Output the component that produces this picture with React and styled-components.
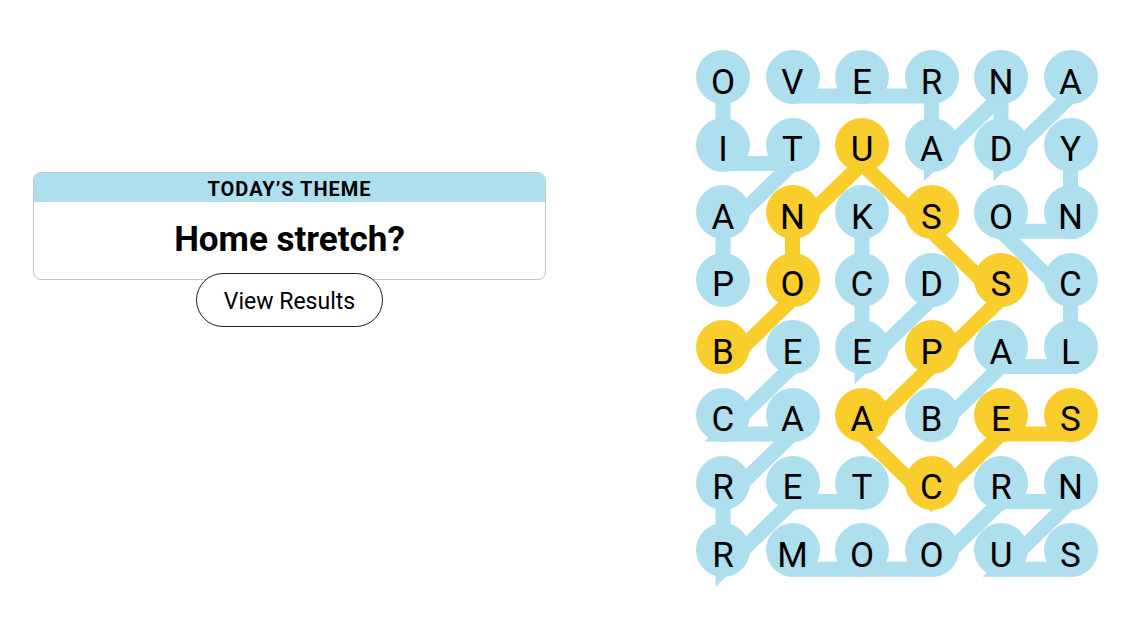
import React from "react";
import styled, { createGlobalStyle } from "styled-components";

const GlobalStyle = createGlobalStyle`
  html, body { margin: 0; padding: 0; background: #ffffff; }
  body { font-family: Roboto, "Liberation Sans", Arial, sans-serif; color: #000; }
`;

const BLUE = "#aedfee";
const YELLOW = "#f8cd2c";

const CELL = 54;
const PITCH_X = 69.5;
const PITCH_Y = 67.6;
const LINE_DY = 19;

const LETTERS = [
  "OVERNA",
  "ITUADY",
  "ANKSON",
  "POCDSC",
  "BEEPAL",
  "CAABES",
  "RETCRN",
  "RMOOUS",
];

const WORDS = [
  { kind: "blue", cells: [[3, 0], [2, 0], [1, 1], [1, 0], [0, 0]] },
  { kind: "blue", cells: [[0, 1], [0, 2], [0, 3], [1, 3], [0, 4], [1, 4], [0, 5]] },
  { kind: "blue", cells: [[5, 3], [4, 4], [4, 5], [3, 5], [2, 4], [2, 5], [1, 5]] },
  { kind: "blue", cells: [[3, 3], [4, 2], [3, 2], [2, 2]] },
  { kind: "blue", cells: [[6, 2], [6, 1], [7, 0], [6, 0], [5, 1], [5, 0], [4, 1]] },
  { kind: "blue", cells: [[7, 5], [7, 4], [6, 5], [6, 4], [7, 3], [7, 2], [7, 1]] },
  {
    kind: "yellow",
    cells: [[4, 0], [3, 1], [2, 1], [1, 2], [2, 3], [3, 4], [4, 3], [5, 2], [6, 3], [5, 4], [5, 5]],
  },
];

const cellKind = {};
WORDS.forEach((w) => w.cells.forEach(([r, c]) => (cellKind[`${r}-${c}`] = w.kind)));

const Page = styled.main`
  display: flex;
  align-items: flex-start;
  height: 637px;
  overflow: hidden;
`;

const ThemeColumn = styled.section`
  width: 513px;
  margin-left: 33px;
  padding-top: 172px;
  display: flex;
  flex-direction: column;
  align-items: center;
`;

const ThemeCard = styled.div`
  width: 100%;
  box-sizing: border-box;
  border: 1px solid #c4c4c4;
  border-radius: 8px;
  overflow: hidden;
  background: #fff;
`;

const ThemeHeader = styled.div`
  height: 29px;
  background: ${BLUE};
  display: flex;
  align-items: center;
  justify-content: center;
  font-size: 20px;
  font-weight: 700;
  letter-spacing: 1px;
  text-transform: uppercase;
  padding-top: 3px;
  box-sizing: border-box;
`;

const ThemeTitle = styled.h2`
  margin: 0;
  height: 77px;
  display: flex;
  align-items: center;
  justify-content: center;
  font-size: 35px;
  font-weight: 700;
  letter-spacing: 0;
  padding-bottom: 2px;
  box-sizing: border-box;
`;

const ResultsButton = styled.button`
  position: relative;
  margin-top: -7px;
  width: 187px;
  height: 54px;
  border-radius: 27px;
  border: 1px solid #222;
  background: #fff;
  color: #000;
  font-family: Roboto, "Liberation Sans", Arial, sans-serif;
  font-size: 23px;
  font-weight: 400;
  padding: 2px 0 0;
  cursor: pointer;
`;

const BoardColumn = styled.section`
  margin-left: 150px;
  padding-top: 50px;
`;

const Board = styled.div`
  position: relative;
  display: grid;
  grid-template-columns: repeat(6, ${CELL}px);
  grid-auto-rows: ${CELL}px;
  column-gap: ${PITCH_X - CELL}px;
  row-gap: ${PITCH_Y - CELL}px;
`;

const Links = styled.svg`
  position: absolute;
  left: 0;
  top: 0;
  overflow: visible;
  pointer-events: none;
  z-index: 0;
`;

const LetterCell = styled.button`
  position: relative;
  z-index: 1;
  width: ${CELL}px;
  height: ${CELL}px;
  border: none;
  border-radius: 50%;
  padding: 10px 0 0;
  box-sizing: border-box;
  background: ${(p) => (p.$kind === "yellow" ? YELLOW : BLUE)};
  display: flex;
  align-items: center;
  justify-content: center;
  font-family: Roboto, "Liberation Sans", Arial, sans-serif;
  font-size: 35px;
  font-weight: 400;
  line-height: 1;
  color: #000;
  text-transform: uppercase;
`;

const center = ([r, c]) => [CELL / 2 + c * PITCH_X, CELL / 2 + r * PITCH_Y + LINE_DY];

export default function App() {
  const boardW = CELL + 5 * PITCH_X;
  const boardH = CELL + 7 * PITCH_Y;
  return (
    <>
      <GlobalStyle />
      <Page>
        <ThemeColumn>
          <ThemeCard>
            <ThemeHeader>Today’s Theme</ThemeHeader>
            <ThemeTitle>Home stretch?</ThemeTitle>
          </ThemeCard>
          <ResultsButton>View Results</ResultsButton>
        </ThemeColumn>
        <BoardColumn>
          <Board>
            <Links width={boardW} height={boardH} viewBox={`0 0 ${boardW} ${boardH}`}>
              {WORDS.map((w, i) => (
                <polyline
                  key={i}
                  points={w.cells.map((cell) => center(cell).join(",")).join(" ")}
                  fill="none"
                  stroke={w.kind === "yellow" ? YELLOW : BLUE}
                  strokeWidth={15}
                  strokeLinejoin="miter"
                  strokeMiterlimit={4}
                  strokeLinecap="butt"
                />
              ))}
            </Links>
            {LETTERS.map((row, r) =>
              row.split("").map((ch, c) => (
                <LetterCell key={`${r}-${c}`} $kind={cellKind[`${r}-${c}`]}>
                  {ch}
                </LetterCell>
              ))
            )}
          </Board>
        </BoardColumn>
      </Page>
    </>
  );
}
